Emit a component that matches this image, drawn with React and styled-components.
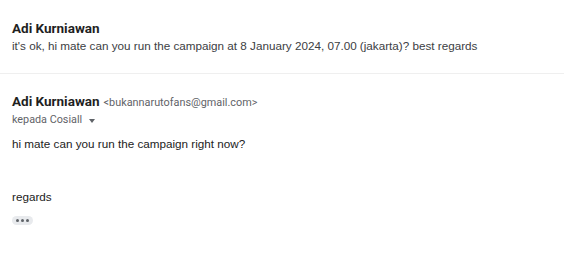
import React from "react";
import styled, { createGlobalStyle } from "styled-components";

const Global = createGlobalStyle`
  html, body { margin: 0; padding: 0; background: #fff; }
  body { font-family: Roboto, "Liberation Sans", Arial, sans-serif; color: #202124; }
`;

const Page = styled.div`
  width: 564px;
  height: 255px;
  overflow: hidden;
  background: #fff;
`;

const Collapsed = styled.div`
  padding: 18px 12px 0;
  border-bottom: 1px solid #efefef;
  box-sizing: border-box;
  height: 74px;
`;

const Name = styled.span`
  font-family: Roboto, "Liberation Sans", Arial, sans-serif;
  font-weight: 700;
  font-size: 13.5px;
  line-height: 18px;
  color: #1f1f1f;
`;

const Snippet = styled.div`
  font-family: "Liberation Sans", Arial, sans-serif;
  font-size: 11.7px;
  line-height: 18px;
  color: #3c4043;
  white-space: nowrap;
`;

const Expanded = styled.div`
  padding: 18px 12px 0;
`;

const HeaderLine = styled.div`
  display: flex;
  align-items: baseline;
  gap: 4px;
  line-height: 18px;
`;

const Email = styled.span`
  font-family: Roboto, "Liberation Sans", Arial, sans-serif;
  font-size: 10.85px;
  color: #5f6368;
`;

const Recipient = styled.div`
  display: flex;
  align-items: center;
  gap: 7px;
  font-family: Roboto, "Liberation Sans", Arial, sans-serif;
  font-size: 10.8px;
  color: #5f6368;
  line-height: 16px;
`;

const Caret = styled.span`
  width: 0;
  height: 0;
  border-left: 3.5px solid transparent;
  border-right: 3.5px solid transparent;
  border-top: 4px solid #5f6368;
  margin-top: 2px;
`;

const Body = styled.div`
  font-family: "Liberation Sans", Arial, sans-serif;
  font-size: 11.7px;
  line-height: 18px;
  color: #222;
  margin-top: ${(p) => p.$top}px;
`;

const DotsButton = styled.div`
  display: flex;
  align-items: center;
  justify-content: center;
  gap: 2px;
  width: 21px;
  height: 9px;
  border-radius: 5px;
  background: #e8eaed;
  margin-top: 10px;
`;

const Dot = styled.span`
  width: 3px;
  height: 3px;
  border-radius: 50%;
  background: #5f6368;
`;

export default function App() {
  return (
    <Page>
      <Global />
      <Collapsed>
        <Name>Adi Kurniawan</Name>
        <Snippet>
          it's ok, hi mate can you run the campaign at 8 January 2024, 07.00 (jakarta)? best regards
        </Snippet>
      </Collapsed>
      <Expanded>
        <HeaderLine>
          <Name>Adi Kurniawan</Name>
          <Email>&lt;bukannarutofans@gmail.com&gt;</Email>
        </HeaderLine>
        <Recipient>
          kepada Cosiall <Caret />
        </Recipient>
        <Body $top={7}>hi mate can you run the campaign right now?</Body>
        <Body $top={35}>regards</Body>
        <DotsButton>
          <Dot />
          <Dot />
          <Dot />
        </DotsButton>
      </Expanded>
    </Page>
  );
}
